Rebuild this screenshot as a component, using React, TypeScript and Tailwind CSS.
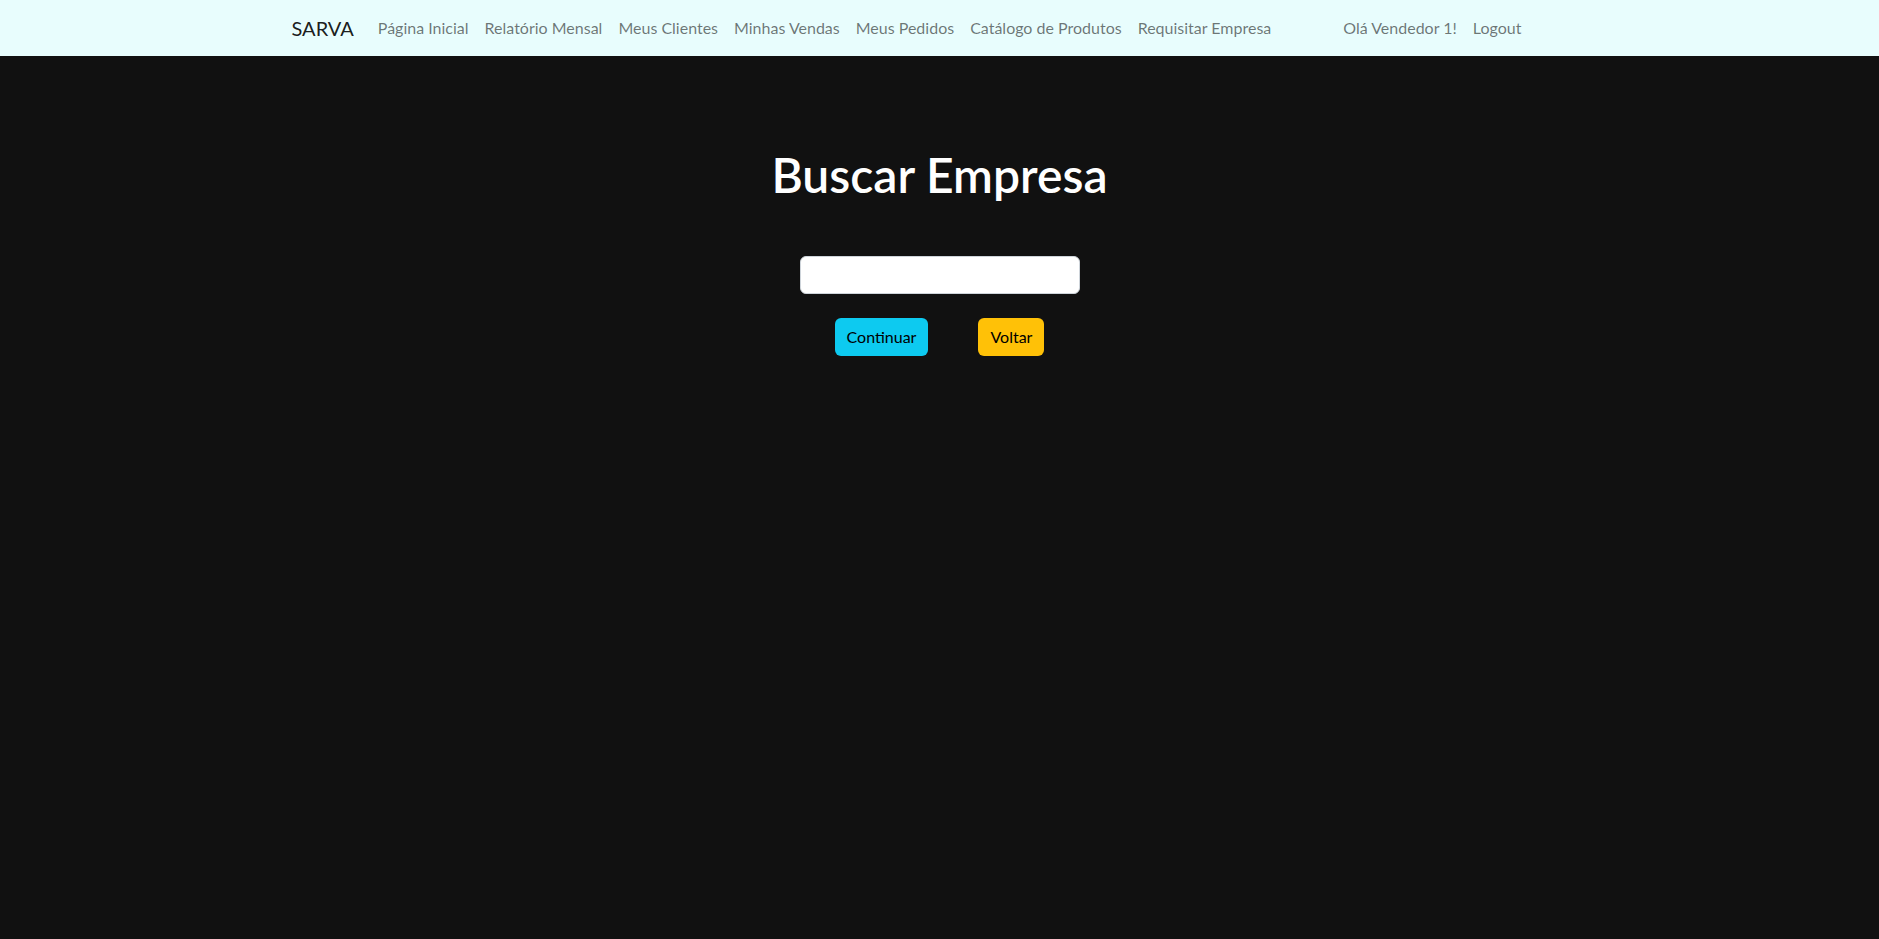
export default function App() {
    const links = [
        "Página Inicial",
        "Relatório Mensal",
        "Meus Clientes",
        "Minhas Vendas",
        "Meus Pedidos",
        "Catálogo de Produtos",
        "Requisitar Empresa",
    ];

    return (
        <div className="min-h-screen bg-[#111111] font-['Lato',sans-serif]">
            {/* Navbar */}
            <nav className="h-14 bg-[#e8fdfd]">
                <div className="mx-auto flex h-full w-[1320px] items-center px-3">
                    <a className="mr-4 text-xl text-black/90">SARVA</a>
                    <ul className="flex">
                        {links.map((l) => (
                            <li key={l}>
                                <a className="block px-2 py-2 text-base text-black/55">{l}</a>
                            </li>
                        ))}
                    </ul>
                    <ul className="ml-14 flex">
                        <li>
                            <a className="block px-2 py-2 text-base text-black/55">Olá Vendedor 1!</a>
                        </li>
                        <li>
                            <a className="block px-2 py-2 text-base text-black/55">Logout</a>
                        </li>
                    </ul>
                </div>
            </nav>

            {/* Search form */}
            <main className="flex flex-col items-center pt-[90px]">
                <h1 className="text-[48px] leading-[1.2] font-semibold text-white">Buscar Empresa</h1>
                <input
                    type="text"
                    className="mt-[52px] h-[38px] w-[280px] rounded-md border border-[#ced4da] bg-white px-3 outline-none"
                />
                <div className="mt-6 flex gap-[50px]">
                    <button className="h-[38px] rounded-md bg-[#0dcaf0] px-3 text-base text-black">Continuar</button>
                    <button className="h-[38px] rounded-md bg-[#ffc107] px-3 text-base text-black">Voltar</button>
                </div>
            </main>
        </div>
    );
}
